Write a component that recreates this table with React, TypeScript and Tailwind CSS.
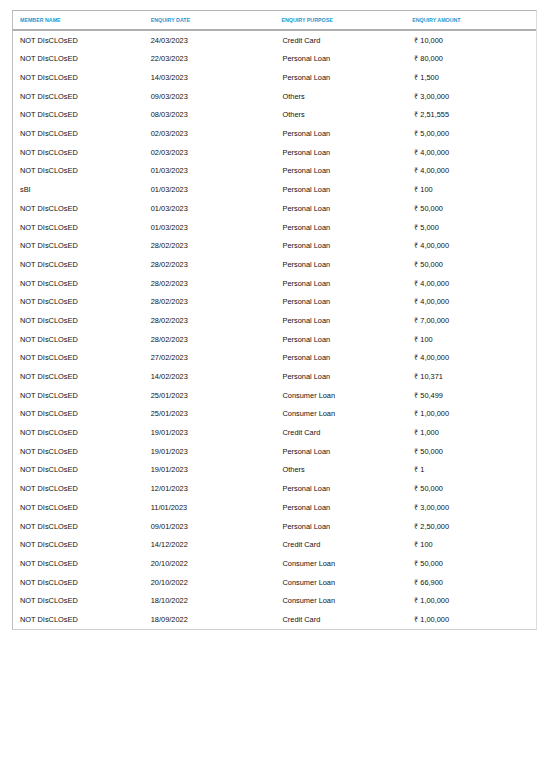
const rows: [string, string, string, string][] = [
  ["NOT DIsCLOsED", "24/03/2023", "Credit Card", "10,000"],
  ["NOT DIsCLOsED", "22/03/2023", "Personal Loan", "80,000"],
  ["NOT DIsCLOsED", "14/03/2023", "Personal Loan", "1,500"],
  ["NOT DIsCLOsED", "09/03/2023", "Others", "3,00,000"],
  ["NOT DIsCLOsED", "08/03/2023", "Others", "2,51,555"],
  ["NOT DIsCLOsED", "02/03/2023", "Personal Loan", "5,00,000"],
  ["NOT DIsCLOsED", "02/03/2023", "Personal Loan", "4,00,000"],
  ["NOT DIsCLOsED", "01/03/2023", "Personal Loan", "4,00,000"],
  ["sBI", "01/03/2023", "Personal Loan", "100"],
  ["NOT DIsCLOsED", "01/03/2023", "Personal Loan", "50,000"],
  ["NOT DIsCLOsED", "01/03/2023", "Personal Loan", "5,000"],
  ["NOT DIsCLOsED", "28/02/2023", "Personal Loan", "4,00,000"],
  ["NOT DIsCLOsED", "28/02/2023", "Personal Loan", "50,000"],
  ["NOT DIsCLOsED", "28/02/2023", "Personal Loan", "4,00,000"],
  ["NOT DIsCLOsED", "28/02/2023", "Personal Loan", "4,00,000"],
  ["NOT DIsCLOsED", "28/02/2023", "Personal Loan", "7,00,000"],
  ["NOT DIsCLOsED", "28/02/2023", "Personal Loan", "100"],
  ["NOT DIsCLOsED", "27/02/2023", "Personal Loan", "4,00,000"],
  ["NOT DIsCLOsED", "14/02/2023", "Personal Loan", "10,371"],
  ["NOT DIsCLOsED", "25/01/2023", "Consumer Loan", "50,499"],
  ["NOT DIsCLOsED", "25/01/2023", "Consumer Loan", "1,00,000"],
  ["NOT DIsCLOsED", "19/01/2023", "Credit Card", "1,000"],
  ["NOT DIsCLOsED", "19/01/2023", "Personal Loan", "50,000"],
  ["NOT DIsCLOsED", "19/01/2023", "Others", "1"],
  ["NOT DIsCLOsED", "12/01/2023", "Personal Loan", "50,000"],
  ["NOT DIsCLOsED", "11/01/2023", "Personal Loan", "3,00,000"],
  ["NOT DIsCLOsED", "09/01/2023", "Personal Loan", "2,50,000"],
  ["NOT DIsCLOsED", "14/12/2022", "Credit Card", "100"],
  ["NOT DIsCLOsED", "20/10/2022", "Consumer Loan", "50,000"],
  ["NOT DIsCLOsED", "20/10/2022", "Consumer Loan", "66,900"],
  ["NOT DIsCLOsED", "18/10/2022", "Consumer Loan", "1,00,000"],
  ["NOT DIsCLOsED", "18/09/2022", "Credit Card", "1,00,000"],
];

const headers = ["MEMBER NAME", "ENQUIRY DATE", "ENQUIRY PURPOSE", "ENQUIRY AMOUNT"];

export default function App() {
  return (
    <div className="w-[540px] h-[762px] bg-white pt-[10px] pl-[12px] pr-[3px] font-['Liberation_Sans',sans-serif] text-[#111]">
      <div className="border-t border-l border-t-[#b4b4b4] border-l-[#bdbdbd] border-r border-b border-r-[#dcdcdc] border-b-[#d0d0d0]">
        <div className="grid grid-cols-4 h-[20px] items-center border-b-2 border-[#b0b0b0]">
          {headers.map((h) => (
            <div key={h} className="pl-[7px] pt-[1px] text-[5.3px] leading-none font-bold text-[#1a9ad0]">
              {h}
            </div>
          ))}
        </div>
        <div>
          {rows.map((r, i) => (
            <div key={i} className="grid grid-cols-4 h-[18.7px] items-center text-[7.4px] leading-none">
              <div className="pl-[7px]">{r[0]}</div>
              <div className="pl-[7px]">{r[1]}</div>
              <div className="pl-[8px]">{r[2]}</div>
              <div className="pl-[9px]">₹ {r[3]}</div>
            </div>
          ))}
        </div>
      </div>
    </div>
  );
}
